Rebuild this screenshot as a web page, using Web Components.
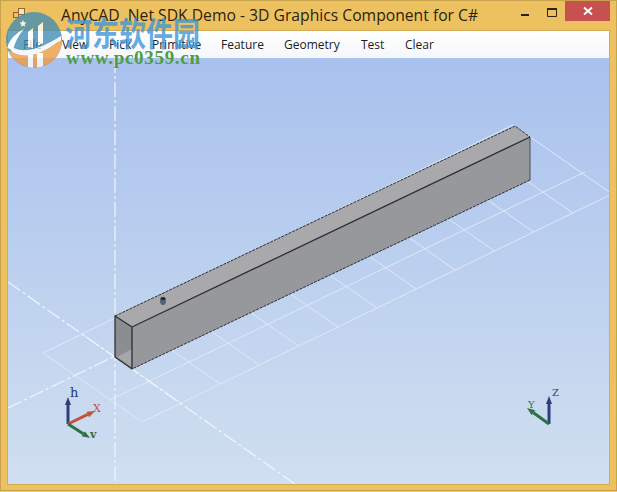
<!DOCTYPE html>
<html>
<head>
<meta charset="utf-8">
<title>AnyCAD .Net SDK Demo</title>
<style>
  html, body { margin: 0; padding: 0; background: #efc872; }
</style>
</head>
<body>
<app-window title="AnyCAD .Net SDK Demo - 3D Graphics Component for C#">
  <menu-bar>
    <menu-item style="--w:39px">File</menu-item>
    <menu-item style="--w:47px">View</menu-item>
    <menu-item style="--w:43px">Pick</menu-item>
    <menu-item style="--w:69px">Primitive</menu-item>
    <menu-item style="--w:63px">Feature</menu-item>
    <menu-item style="--w:77px">Geometry</menu-item>
    <menu-item style="--w:44px">Test</menu-item>
    <menu-item style="--w:45px">Clear</menu-item>
  </menu-bar>
  <cad-viewport></cad-viewport>
</app-window>
<site-watermark></site-watermark>

<script>
const windowTemplate = (title) => `
  <style>
    :host {
      display: flex;
      flex-direction: column;
      width: 617px;
      height: 491px;
      box-sizing: border-box;
      background: #edc15f;
      border: 1px solid #c9a24e;
      font-family: "Open Sans", "Noto Sans", sans-serif;
    }
    .bar {
      flex: 0 0 30px;
      display: flex;
      align-items: center;
      padding: 0 6px 0 7px;
      color: #2b2412;
    }
    .icon { flex: 0 0 53px; height: 30px; }
    .title { flex: 1; font-size: 15.7px; white-space: nowrap; padding-bottom: 2px; }
    .client {
      flex: 1;
      margin: 0 7px 6px 7px;
      display: flex;
      flex-direction: column;
      min-height: 0;
      box-shadow: 0 0 0 1px #d3ac58;
    }
    .btns { display: flex; align-self: flex-start; }
    .btn { width: 27px; height: 20px; display: flex; align-items: center; justify-content: center; }
    .btn.close { width: 45px; background: #c75050; }
  </style>
  <div class="bar">
    <div class="icon">
      <svg width="22" height="22" viewBox="0 0 22 22" style="margin-top:4px">
        <rect x="5.500" y="7.500" width="5" height="5" fill="#edc15f" stroke="#a0552e"/>
        <rect x="10.500" y="3.500" width="6" height="6" fill="#f6e6b0" stroke="#8a6a3a"/>
      </svg>
    </div>
    <div class="title">${title}</div>
    <div class="btns">
      <div class="btn"><svg width="10" height="10" style="margin-top:7px"><rect x="1" y="4" width="8" height="2" fill="#2b2412"/></svg></div>
      <div class="btn"><svg width="10" height="9" style="margin-top:3px"><path d="M.5 1.500H9.500V8.500H.5Z" fill="none" stroke="#2b2412"/><rect x="0" y="0" width="10" height="2" fill="#2b2412"/></svg></div>
      <div class="btn close"><svg width="10" height="10"><path d="M1 1.500L9 8.500M9 1.500L1 8.500" stroke="#fff" stroke-width="2"/></svg></div>
    </div>
  </div>
  <div class="client"><slot></slot></div>
`;

customElements.define('app-window', class AppWindow extends HTMLElement {
  constructor() {
    super();
    this.shadow = this.attachShadow({ mode: 'open' });
  }
  connectedCallback() {
    this.shadow.innerHTML = windowTemplate(this.getAttribute('title'));
  }
});

customElements.define('menu-bar', class MenuBar extends HTMLElement {
  constructor() {
    super();
    this.attachShadow({ mode: 'open' }).innerHTML = `
      <style>
        :host {
          display: flex;
          flex: 0 0 27px;
          align-items: center;
          padding-left: 15px;
          background: linear-gradient(#ffffff, #f6f7fb);
          font-family: "Open Sans", "Noto Sans", sans-serif;
          font-size: 12px;
          color: #1c1c1c;
        }
      </style>
      <slot></slot>`;
  }
});

customElements.define('menu-item', class MenuItem extends HTMLElement {
  constructor() {
    super();
    this.attachShadow({ mode: 'open' }).innerHTML = `
      <style>
        :host { display: block; width: var(--w, 45px); white-space: nowrap; }
      </style>
      <slot></slot>`;
  }
});

// grid coordinates are page pixels, svg is shifted by the viewport origin
const OX = 8, OY = 58;
const pts = (list) => list.map(([x, y]) => `${x - OX},${y - OY}`).join(' ');
const line = (a, b) => `<polyline points="${pts([a, b])}"/>`;

const renderGrid = () => {
  let res = line([43, 353], [513, 125]) + line([142, 422], [612, 194]) + line([110, 400], [585, 172]);
  for (let k = 0; k <= 12; k++) {
    const x = 43 + 39.17 * k, y = 353 - 19 * k;
    res += line([x, y], [x + 99, y + 69]);
  }
  return res;
};

const renderGizmo = (origin, axes) => axes.map(([tip, colour, width]) => {
  const dx = tip[0] - origin[0], dy = tip[1] - origin[1];
  const len = Math.hypot(dx, dy), ux = dx / len, uy = dy / len;
  const bx = tip[0] - ux * 8, by = tip[1] - uy * 8;
  return `<polyline points="${pts([origin, [bx, by]])}" stroke="${colour}" stroke-width="${width}" fill="none"/>
    <polygon fill="${colour}" points="${pts([tip, [bx - uy * 3, by + ux * 3], [bx + uy * 3, by - ux * 3]])}"/>`;
}).join('');

const label = (x, y, text, colour, size = 11, weight = 'normal') =>
  `<text x="${x - OX}" y="${y - OY}" fill="${colour}" font-family="'DejaVu Serif', serif" font-size="${size}" font-weight="${weight}">${text}</text>`;

customElements.define('cad-viewport', class CadViewport extends HTMLElement {
  constructor() {
    super();
    this.attachShadow({ mode: 'open' }).innerHTML = `
      <style>
        :host {
          display: block;
          flex: 1;
          min-height: 0;
          background: linear-gradient(#a9c1ed, #d0dff0);
          overflow: hidden;
        }
        svg { display: block; width: 100%; height: 100%; }
      </style>
      <svg viewBox="0 0 601 426" preserveAspectRatio="xMinYMin slice">
        <g stroke="#dfe8f6" stroke-width="1" fill="none">${renderGrid()}</g>
        <g stroke="#f0f6fc" stroke-width="1.200" fill="none" stroke-dasharray="15 3 3 3">
          <polyline points="${pts([[115, 58], [115, 484]])}"/>
          <polyline points="${pts([[8, 282], [295, 484]])}"/>
          <polyline points="${pts([[8, 408], [115, 356]])}"/>
        </g>
        <polygon fill="#a9a9ab" points="${pts([[115, 316], [515, 126], [530, 137], [132, 327]])}"/>
        <polygon fill="#97989c" points="${pts([[132, 327], [530, 137], [530, 180], [132, 369]])}"/>
        <polygon fill="#8c8d90" points="${pts([[115, 316], [132, 327], [132, 369], [115, 357]])}"/>
        <polygon fill="#a6a7aa" points="${pts([[117, 357], [132, 349], [132, 367]])}"/>
        <g fill="none" stroke="#2a2e34" stroke-linejoin="round">
          <polyline stroke-width="1" stroke-dasharray="3 1" points="${pts([[115, 316], [515, 126], [530, 137]])}"/>
          <polyline stroke-width="1" stroke-dasharray="3 1" points="${pts([[530, 180], [132, 369]])}"/>
          <polyline stroke-width="1" stroke="#4a4d52" points="${pts([[530, 137], [530, 180]])}"/>
          <polyline stroke-width="1.300" points="${pts([[530, 137], [132, 327], [115, 316], [115, 357], [132, 369], [132, 327]])}"/>
        </g>
        <g>
          <ellipse cx="${163 - OX}" cy="${301 - OY}" rx="3" ry="4" fill="#50627a"/>
          <ellipse cx="${163 - OX}" cy="${298.500 - OY}" rx="2.400" ry="1.600" fill="#25282e"/>
        </g>
        ${renderGizmo([68, 424], [[[68, 397], '#2c3f7c', 3], [[95, 411], '#c0523f', 3], [[90, 438], '#2f6f45', 3]])}
        ${label(70, 397, 'h', '#24347a', 13)}
        ${label(93, 412, 'X', '#c0523f', 11)}
        ${label(90, 438, 'v', '#2f6f45', 11, 'bold')}
        ${renderGizmo([549, 424], [[[549, 396], '#2c3f7c', 3], [[527, 408], '#2f6f45', 3]])}
        ${label(552, 396, 'Z', '#2c3f7c', 10)}
        ${label(528, 408, 'Y', '#2f7f45', 10)}
      </svg>`;
  }
});

// floating site stamp over the top left corner
customElements.define('site-watermark', class SiteWatermark extends HTMLElement {
  constructor() {
    super();
    this.attachShadow({ mode: 'open' }).innerHTML = `
      <style>
        :host {
          position: absolute;
          left: 5px;
          top: 11px;
          width: 200px;
          height: 60px;
          display: block;
        }
        svg { position: absolute; left: 0; top: 0; opacity: .78; }
        .cn {
          position: absolute;
          left: 60px;
          top: 2px;
          font: bold 27px/32px "Noto Sans CJK SC", sans-serif;
          transform: scaleY(1.22);
          transform-origin: 0 0;
          color: #3f97d8;
          opacity: .8;
          white-space: nowrap;
        }
        .url {
          position: absolute;
          left: 61px;
          top: 37px;
          font: bold 19px/20px "Liberation Serif", serif;
          letter-spacing: .7px;
          color: #4f9d45;
          white-space: nowrap;
        }
      </style>
      <svg width="58" height="58" viewBox="0 0 58 58">
        <defs><clipPath id="disc"><circle cx="29" cy="29" r="28"/></clipPath></defs>
        <g clip-path="url(#disc)">
          <rect width="58" height="58" fill="#3f8db4"/>
          <path d="M2 32Q17 49.500 56 25V31L53 31Q26 52 7 41Z" fill="#f6f7f8"/>
          <path d="M0 38L7 41Q26 52 53 31L58 28V58H0Z" fill="#f09a3e"/>
          <path d="M2 37Q6 24 19 18Q11 27 8 39Z" fill="#fff"/>
          <path d="M23 21L28 17V37L23 36Z" fill="#fff"/>
          <path d="M33 15L38 11V32L33 35Z" fill="#fff"/>
          <rect x="23" y="44" width="5" height="14" fill="#fff"/>
          <rect x="32" y="42" width="6" height="16" fill="#fff"/>
          <path d="M18 9l1 2.300 2.500.3-1.900 1.600.6 2.500-2.200-1.300-2.200 1.300.6-2.500-1.900-1.600 2.500-.3z" fill="#fff"/>
        </g>
      </svg>
      <div class="cn">河东软件园</div>
      <div class="url">www.pc0359.cn</div>`;
  }
});
</script>
</body>
</html>
